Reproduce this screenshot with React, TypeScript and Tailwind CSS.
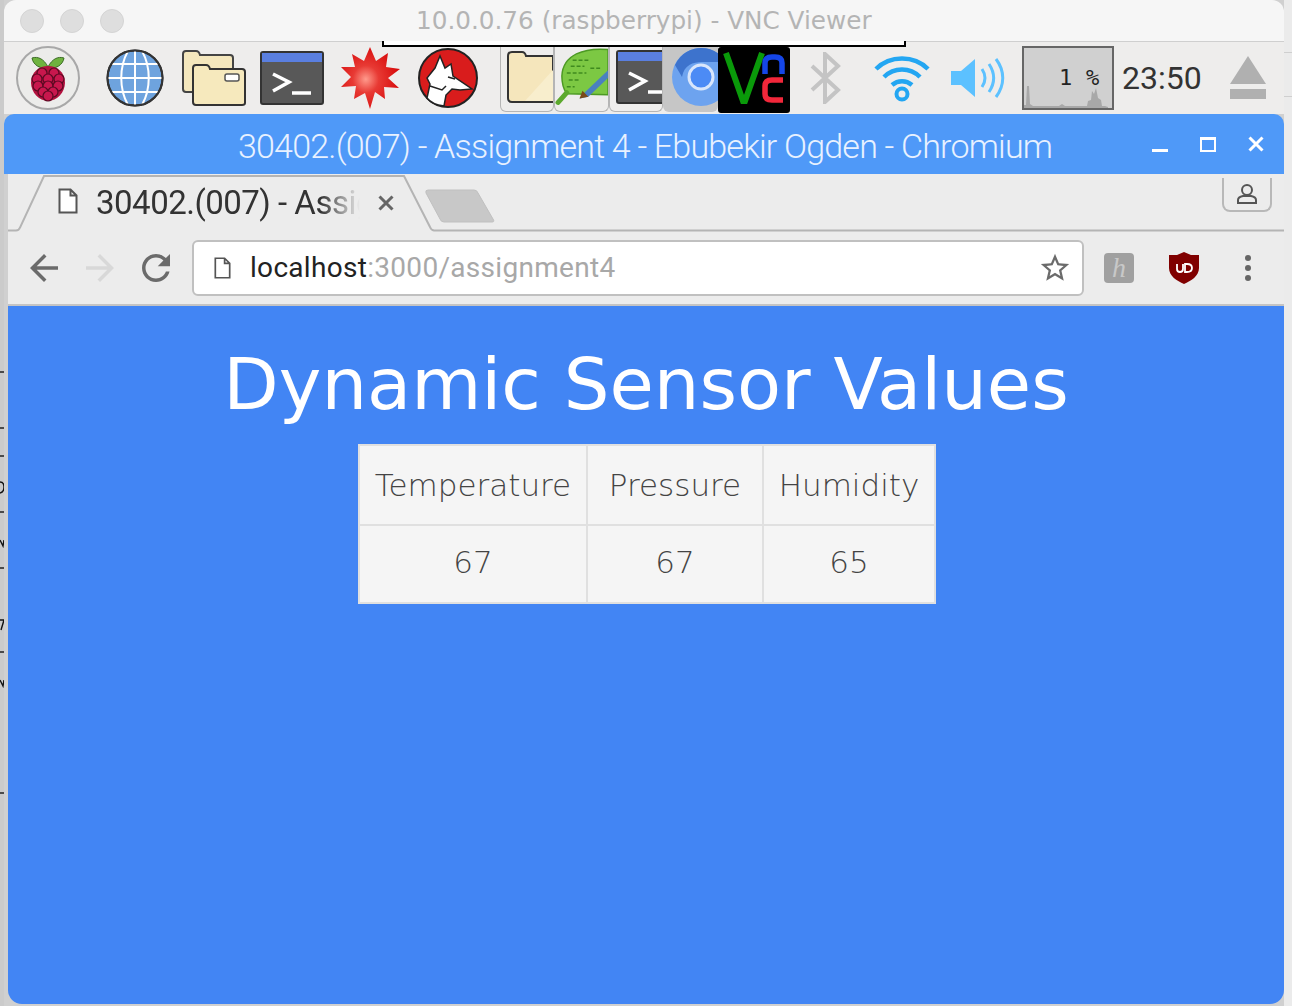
const BERRIES: [number, number][] = [[26, 27], [38, 27], [21, 33], [32, 33], [43, 33], [22, 40], [32, 40], [42, 40], [27, 46], [37, 46], [32, 50]];

function Raspberry() {
  return (
    <svg width="64" height="64" viewBox="0 0 64 64">
      <circle cx="32" cy="32" r="31" fill="#ececea" stroke="#a8a8a8" strokeWidth="2" />
      <path d="M32 21C28 13 22 10 16 12c1 7 9 12 16 9zM32 21c4-8 10-11 16-9-1 7-9 12-16 9z" fill="#6fb33f" stroke="#3a6b24" strokeWidth="1" />
      <path d="M32 20c9 0 17 6 17 17 0 9-8 18-17 18S15 46 15 37c0-11 8-17 17-17z" fill="#b3123f" />
      {BERRIES.map(([x, y], i) => (
        <circle key={i} cx={x} cy={y} r="5" fill="#c8174d" stroke="#5a0a22" strokeWidth="1.2" />
      ))}
    </svg>
  );
}

function Globe() {
  return (
    <svg width="58" height="58" viewBox="0 0 58 58">
      <circle cx="29" cy="29" r="27.5" fill="#6ea3de" stroke="#333" strokeWidth="2" />
      <path d="M29 2v54M2 29h54M6 15h46M6 43h46" stroke="#fff" strokeWidth="2" fill="none" />
      <path d="M22 2c-9 16-9 38 0 54M36 2c9 16 9 38 0 54" stroke="#fff" strokeWidth="2" fill="none" />
      <circle cx="29" cy="29" r="27.5" fill="none" stroke="#333" strokeWidth="2" />
    </svg>
  );
}

function Folders() {
  return (
    <svg width="64" height="56" viewBox="0 0 64 56">
      <path d="M1 4q0-3 3-3h10q3 0 4 4h30q3 0 3 3v34H4q-3 0-3-3z" fill="#f4e7bd" stroke="#444" strokeWidth="2" />
      <path d="M11 18q0-3 3-3h10q3 0 4 4h32q3 0 3 3v31q0 2-3 2H14q-3 0-3-3z" fill="#f6e9bd" stroke="#333" strokeWidth="2" />
      <rect x="43" y="24" width="14" height="7" rx="2" fill="#fff" stroke="#555" strokeWidth="1.5" />
    </svg>
  );
}

function Terminal() {
  return (
    <svg width="64" height="54" viewBox="0 0 64 54">
      <rect x="1" y="1" width="62" height="52" rx="2" fill="#585858" stroke="#333" strokeWidth="2" />
      <rect x="2" y="2" width="60" height="9" fill="#5a7fe0" />
      <path d="M13 23l16 8-16 9" fill="none" stroke="#fff" strokeWidth="3.5" />
      <path d="M32 42h19" stroke="#fff" strokeWidth="3.5" />
    </svg>
  );
}

function Star() {
  return (
    <svg width="60" height="62" viewBox="0 0 60 62">
      <defs>
        <radialGradient id="st" cx="0.42" cy="0.52" r="0.55">
          <stop offset="0" stopColor="#ff9a8c" />
          <stop offset="0.4" stopColor="#e83a34" />
          <stop offset="1" stopColor="#d80e0e" />
        </radialGradient>
      </defs>
      <path d="M30 0l6 14 12-8-2 14 14 2-12 9 11 10-15-1 1 12-10-7-5 17-5-16-11 6 2-13-15 1 10-10L1 20l14 0-3-13 12 7z" fill="url(#st)" />
    </svg>
  );
}

function Wolf() {
  return (
    <svg width="60" height="60" viewBox="0 0 60 60">
      <circle cx="30" cy="30" r="29" fill="#d91c1c" stroke="#222" strokeWidth="2" />
      <path d="M22 8l5 12 6-4 2 12 19 13-12 1-8-1-6 6-2 11c-8-1-14-4-17-8l3-14-3-6 8-10z" fill="#fff" stroke="#222" strokeWidth="1.5" />
      <path d="M12 38l12 4 4-4M30 29l7 2" fill="none" stroke="#222" strokeWidth="1.5" />
    </svg>
  );
}

function SingleFolder() {
  return (
    <svg width="46" height="54" viewBox="0 0 46 54">
      <path d="M1 6q0-4 4-4h10q3 0 4 4h27v46H5q-4 0-4-4z" fill="#f5e6bc" stroke="#333" strokeWidth="2" />
      <path d="M46 20L18 51h28z" fill="#f8eecd" />
    </svg>
  );
}

function Leaf() {
  return (
    <svg width="54" height="62" viewBox="0 0 54 62">
      <path d="M54 3C30 1 8 8 7 30c0 8 2 14 5 18l42 1z" fill="#7cc843" stroke="#4d9a24" strokeWidth="1.5" />
      <path d="M12 47L3 57" stroke="#5ca92e" strokeWidth="5" strokeLinecap="round" />
      <path d="M16 20h14M12 27h20M14 34h12M18 14h18M36 22h10M12 41h8" stroke="#3f8a1f" strokeWidth="1.5" strokeDasharray="4 2" />
      <path d="M54 24L31 46l-6 7 9-2 20-19z" fill="#4a80c0" />
      <path d="M25 53l3-8 6 6z" fill="#7a4a1a" />
    </svg>
  );
}

function ChromiumLogo() {
  return (
    <svg width="54" height="64" viewBox="0 0 54 64">
      <circle cx="37" cy="32" r="29" fill="#6da3ef" />
      <path d="M11 20C17 8 27 3 37 3c11 0 19 5 25 14H38c-9 0-18 3-20 15z" fill="#3d73cd" />
      <circle cx="37" cy="32" r="12" fill="#4c8bf5" stroke="#d9e6fb" strokeWidth="3" />
    </svg>
  );
}

function Vnc() {
  return (
    <svg width="72" height="66" viewBox="0 0 72 66">
      <rect width="72" height="66" rx="3" fill="#000" />
      <path d="M8 6l17 48h2L44 6" fill="none" stroke="#0a9a0a" strokeWidth="6" />
      <path d="M47 27V16q0-6 7-6h3q7 0 7 6v11" fill="none" stroke="#1546e8" strokeWidth="5.5" />
      <path d="M65 33H54q-7 0-7 6v8q0 6 7 6h11" fill="none" stroke="#f2273a" strokeWidth="5.5" />
    </svg>
  );
}

function Bluetooth() {
  return (
    <svg width="32" height="52" viewBox="0 0 32 52">
      <path d="M2 14l26 24-13 12V2l13 12L2 38" fill="none" stroke="#c4c4c4" strokeWidth="4" />
    </svg>
  );
}

function Wifi() {
  return (
    <svg width="56" height="50" viewBox="0 0 56 50">
      <path d="M2 16c14-14 38-14 52 0M10 24c10-10 26-10 36 0M18 32c6-5 14-5 20 0" fill="none" stroke="#23a6f2" strokeWidth="4.5" />
      <circle cx="28" cy="41" r="5.5" fill="none" stroke="#23a6f2" strokeWidth="4" />
    </svg>
  );
}

function Volume() {
  return (
    <svg width="56" height="42" viewBox="0 0 56 42">
      <path d="M1 14h10L25 2v38L11 28H1z" fill="#5cc1ff" />
      <path d="M32 12c4 6 4 12 0 18M39 7c6 9 6 19 0 28M46 2c9 12 9 26 0 38" fill="none" stroke="#5cc1ff" strokeWidth="3" />
    </svg>
  );
}

function Eject() {
  return (
    <svg width="36" height="44" viewBox="0 0 36 44">
      <path d="M18 0l18 28H0z" fill="#b0b0b0" />
      <rect y="33" width="36" height="10" fill="#b0b0b0" />
    </svg>
  );
}

function DocIcon({ w, h, color }: { w: number; h: number; color: string }) {
  return (
    <svg width={w} height={h} viewBox="0 0 20 26">
      <path d="M1.5 1.5h11l6 6v17h-17zM12.5 1.5v6h6" fill="#fff" stroke={color} strokeWidth="2" />
    </svg>
  );
}

function Mat({ d, size, color, flip }: { d: string; size: number; color: string; flip?: boolean }) {
  return (
    <svg width={size} height={size} viewBox="0 0 24 24">
      <path d={d} fill={color} transform={flip ? "matrix(-1 0 0 1 24 0)" : undefined} />
    </svg>
  );
}

const ARROW = "M20 11H7.83l5.59-5.59L12 4l-8 8 8 8 1.41-1.41L7.83 13H20v-2z";
const REFRESH = "M17.65 6.35C16.2 4.9 14.21 4 12 4c-4.42 0-7.99 3.58-7.99 8s3.57 8 7.99 8c3.73 0 6.84-2.55 7.73-6h-2.08c-.82 2.33-3.04 4-5.65 4-3.31 0-6-2.69-6-6s2.69-6 6-6c1.66 0 3.14.69 4.22 1.78L13 11h7V4l-2.35 2.35z";
const STAR = "M22 9.24l-7.19-.62L12 2 9.19 8.63 2 9.24l5.46 4.73L5.82 21 12 17.27 18.18 21l-1.63-7.03L22 9.24zM12 15.4l-3.76 2.27 1-4.28-3.32-2.88 4.38-.38L12 6.1l1.71 4.04 4.38.38-3.32 2.88 1 4.28L12 15.4z";

function Shield() {
  return (
    <svg width="30" height="32" viewBox="0 0 30 32">
      <path d="M15 0l7 3 8 0v13c0 8-8 13-15 16C8 29 0 24 0 16V3h8z" fill="#800000" />
      <path d="M8 12v5q0 3 3 3t3-3v-5" fill="none" stroke="#fff" strokeWidth="1.8" />
      <path d="M16 12h2q5 0 5 4t-5 4h-2z" fill="none" stroke="#fff" strokeWidth="1.8" />
    </svg>
  );
}

function Profile() {
  return (
    <svg width="22" height="22" viewBox="0 0 22 22">
      <circle cx="11" cy="7" r="5" fill="none" stroke="#555" strokeWidth="2" />
      <path d="M2 20v-3q0-3 5-4h8q5 1 5 4v3z" fill="none" stroke="#555" strokeWidth="2" />
    </svg>
  );
}

function CpuGraph() {
  return (
    <svg width="88" height="24" viewBox="0 0 88 24">
      <path d="M0 24V21h2l1-19 2 0 1 18 3 2h26l3-2 3 2h22l1-5 3-1 1-9 2 3 2-6 2 10 3 2 1 6 3 0 3 1v2z" fill="#a8a8a8" />
    </svg>
  );
}

function LeftEdge() {
  return (
    <svg width="4" height="1006" viewBox="0 0 4 1006">
      <path d="M0 372h4M0 428h4M0 456h4M0 512h4M0 568h4M0 652h4M0 793h4" stroke="#222" strokeWidth="1.3" />
      <path d="M0 482q4 0 4 5t-4 6M0 540l3 6 1-6M0 620h4l-3 10M0 680l3 6 1-6" fill="none" stroke="#111" strokeWidth="1.4" />
    </svg>
  );
}

function TabShape() {
  return (
    <svg className="absolute left-0 top-0" width="1276" height="58" viewBox="0 0 1276 58">
      <path d="M0 56.5h8q3 0 4-3L36 2h360l26 51q1 3 4 3.5h850" fill="#ececec" stroke="#b4b4b4" strokeWidth="2" />
      <path d="M420 16h46q3 0 4 3l15 26q2 3-1 3h-48q-3 0-4-3L418 19q-1-3 2-3z" fill="#c8c8c8" stroke="#c0c0c0" />
    </svg>
  );
}

export default function App() {
  return (
    <div className="relative flex h-[1006px] w-[1292px] overflow-hidden bg-[#d0d0d0] font-['Liberation_Sans',sans-serif]">
      <div className="w-1 shrink-0 bg-[#cbcbcb]">
        <LeftEdge />
      </div>
      <div className="flex h-[1004px] w-[1280px] shrink-0 flex-col">
        {/* VNC title bar */}
        <div className="flex h-[42px] shrink-0 items-center rounded-t-[12px] border-b border-[#cfcfcf] bg-[#f6f6f6] pl-4">
          <div className="flex gap-4">
            <span className="h-6 w-6 rounded-full border border-[#d4d4d4] bg-[#dedede]" />
            <span className="h-6 w-6 rounded-full border border-[#d4d4d4] bg-[#dedede]" />
            <span className="h-6 w-6 rounded-full border border-[#d4d4d4] bg-[#dedede]" />
          </div>
          <span className="ml-[292px] whitespace-nowrap font-['DejaVu_Sans',sans-serif] text-[24.7px] text-[#b4b4b4]">
            10.0.0.76 (raspberrypi) - VNC Viewer
          </span>
        </div>

        {/* LXDE panel */}
        <div className="relative flex h-[72px] shrink-0 items-center bg-[#eeedec] pl-3">
          <div className="absolute left-[378px] top-[-1px] h-[6px] w-[524px] border-x-2 border-b-2 border-black bg-white" />
          <Raspberry />
          <div className="ml-[26px]"><Globe /></div>
          <div className="ml-[18px]"><Folders /></div>
          <div className="ml-[14px]"><Terminal /></div>
          <div className="ml-4"><Star /></div>
          <div className="ml-[18px]"><Wolf /></div>
          <div className="ml-[22px] flex h-full">
            <div className="flex h-[70px] w-[54px] items-center justify-end overflow-hidden rounded-b-md border-x border-b border-[#b5b5b5]">
              <SingleFolder />
            </div>
            <div className="flex h-[70px] w-[55px] items-center justify-end overflow-hidden rounded-b-md border-x border-b border-[#b5b5b5]">
              <Leaf />
            </div>
            <div className="flex h-[70px] w-[54px] items-center justify-end overflow-hidden rounded-b-md border-x border-b border-[#b5b5b5] pl-[6px]">
              <div className="w-[48px] overflow-hidden"><Terminal /></div>
            </div>
            <div className="flex h-[70px] w-[55px] items-center justify-end overflow-hidden rounded-b-md bg-[#c6c6c6]">
              <div className="w-[54px]"><ChromiumLogo /></div>
            </div>
            <div className="mt-[5px]"><Vnc /></div>
          </div>
          <div className="ml-5"><Bluetooth /></div>
          <div className="ml-8"><Wifi /></div>
          <div className="ml-5"><Volume /></div>
          <div className="relative ml-4 h-[64px] w-[92px] border-2 border-[#666] bg-[#d0d0d0]">
            <div className="absolute bottom-0 left-0"><CpuGraph /></div>
            <span className="absolute left-[35px] top-[17px] font-['DejaVu_Sans_Mono',monospace] text-[22px] leading-[26px] text-[#222]">1</span>
            <span className="absolute left-[62px] top-[17px] font-['DejaVu_Sans_Mono',monospace] text-[22px] leading-[26px] text-[#222]">%</span>
          </div>
          <span className="ml-2 font-['Roboto',sans-serif] text-[32px] text-[#333]">23:50</span>
          <div className="ml-7"><Eject /></div>
        </div>

        {/* Chromium window */}
        <div className="flex min-h-0 flex-1 flex-col">
          <div className="flex h-[60px] shrink-0 items-center rounded-t-[10px] bg-[#4f99f8]">
            <span className="ml-[234px] whitespace-nowrap pt-1 font-['Roboto',sans-serif] text-[34px] font-light tracking-[-0.8px] text-[#e8f1ff]">
              30402.(007) - Assignment 4 - Ebubekir Ogden - Chromium
            </span>
            <div className="ml-auto flex items-center pr-5">
              <span className="mt-[12px] h-[3px] w-4 bg-white" />
              <span className="ml-[32px] h-[15px] w-[16px] border-2 border-t-[3px] border-white" />
              <svg className="ml-[32px]" width="16" height="16" viewBox="0 0 16 16">
                <path d="M1.5 1.5l13 13M14.5 1.5l-13 13" stroke="#fff" strokeWidth="3" />
              </svg>
            </div>
          </div>

          <div className="flex min-h-0 flex-1 flex-col pl-1">
            <div className="relative flex h-[58px] shrink-0 bg-[#ececec]">
              <TabShape />
              <div className="relative ml-[50px] mt-[14px]"><DocIcon w={20} h={26} color="#555" /></div>
              <span className="relative ml-[18px] mt-[8px] w-[264px] overflow-hidden whitespace-nowrap font-['Roboto',sans-serif] text-[33px] leading-[42px] tracking-[-0.5px] text-[#333] [mask-image:linear-gradient(to_right,#000_85%,transparent_100%)]">
                30402.(007) - Assignment 4
              </span>
              <svg className="relative ml-[18px] mt-[21px]" width="16" height="16" viewBox="0 0 16 16">
                <path d="M1.5 1.5l13 13M14.5 1.5l-13 13" stroke="#666" strokeWidth="3" />
              </svg>
              <div className="relative ml-auto mr-3 mt-[4px] flex h-[34px] w-[50px] items-center justify-center rounded-b-lg border-x-2 border-b-2 border-[#b8b8b8]">
                <Profile />
              </div>
            </div>

            <div className="flex h-[74px] shrink-0 items-center border-b-2 border-[#c4c4c4] bg-[#ececec] pl-[15px]">
              <Mat d={ARROW} size={42} color="#6b6b6b" />
              <div className="ml-[14px]"><Mat d={ARROW} size={42} color="#d8d8d8" flip /></div>
              <div className="ml-[14px]"><Mat d={REFRESH} size={42} color="#6b6b6b" /></div>
              <div className="ml-[15px] flex h-[56px] w-[892px] items-center rounded-md border-2 border-[#c0c0c0] bg-white pl-5 pr-[10px]">
                <DocIcon w={17} h={22} color="#555" />
                <span className="ml-[19px] whitespace-nowrap font-['Roboto',sans-serif] text-[28px] tracking-[0.3px] text-[#222]">
                  localhost<span className="text-[#a8a8a8]">:3000/assignment4</span>
                </span>
                <div className="ml-auto"><Mat d={STAR} size={34} color="#6b6b6b" /></div>
              </div>
              <div className="ml-5 flex h-[30px] w-[30px] items-center justify-center rounded-sm bg-[#a0a0a0] font-['Liberation_Serif',serif] text-[28px] italic text-[#c8c8c8]">
                h
              </div>
              <div className="ml-[35px]"><Shield /></div>
              <div className="ml-[46px] flex flex-col gap-[4px]">
                <span className="h-[6px] w-[6px] rounded-full bg-[#666]" />
                <span className="h-[6px] w-[6px] rounded-full bg-[#666]" />
                <span className="h-[6px] w-[6px] rounded-full bg-[#666]" />
              </div>
            </div>

            <div className="min-h-0 flex-1 rounded-b-[14px] bg-[#4285f4] pt-[32px] text-center">
              <h1 className="font-['DejaVu_Sans',sans-serif] text-[72px] leading-[92px] text-white">
                Dynamic Sensor Values
              </h1>
              <table className="ml-[350px] mt-[14px] w-[576px] table-fixed border-collapse bg-[#f5f5f5] font-['DejaVu_Sans',sans-serif] text-[31px] font-extralight text-[#444]">
                <colgroup>
                  <col className="w-[228px]" />
                  <col className="w-[176px]" />
                  <col className="w-[172px]" />
                </colgroup>
                <tbody>
                  <tr className="h-[80px]">
                    <td className="border-2 border-[#e0e0e0]">Temperature</td>
                    <td className="border-2 border-[#e0e0e0]">Pressure</td>
                    <td className="border-2 border-[#e0e0e0]">Humidity</td>
                  </tr>
                  <tr className="h-[78px]">
                    <td className="border-2 border-[#e0e0e0] pb-1">67</td>
                    <td className="border-2 border-[#e0e0e0] pb-1">67</td>
                    <td className="border-2 border-[#e0e0e0] pb-1">65</td>
                  </tr>
                </tbody>
              </table>
            </div>
          </div>
        </div>
      </div>
      <div className="flex w-2 shrink-0 flex-col bg-[#ebebeb]">
        <div className="h-[53px] border-b border-[#cfcfcf]" />
        <div className="h-[44px] border-b border-[#cfcfcf]" />
      </div>
    </div>
  );
}
